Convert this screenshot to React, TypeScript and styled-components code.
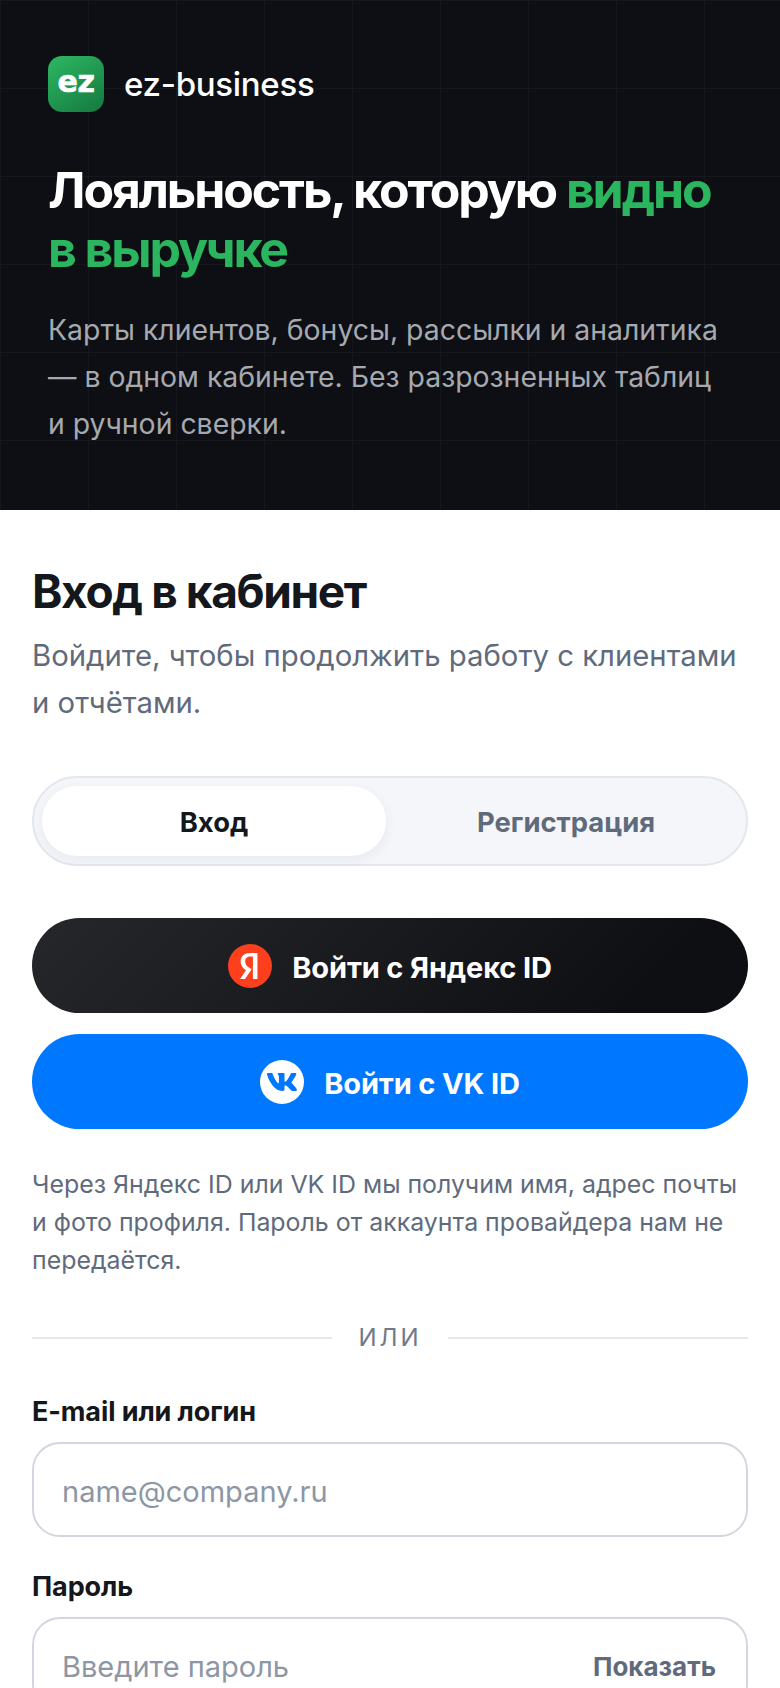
import React from "react";
import styled, { createGlobalStyle } from "styled-components";
import { FaVk } from "react-icons/fa";

const GlobalStyle = createGlobalStyle`
  * {
    box-sizing: border-box;
  }
  html, body {
    margin: 0;
    padding: 0;
    background: #fff;
  }
  body {
    height: 1688px;
    overflow: hidden;
    font-family: Inter, "Noto Sans", sans-serif;
  }
`;

const YandexLogo = () => (
  <svg width="44" height="44" viewBox="2 2 20 20" aria-hidden="true">
    <circle cx="12" cy="12" r="10" fill="#fc3f1d" />
    <path
      fill="#fff"
      d="M13.32 7.666h-.924c-1.694 0-2.585.858-2.585 2.123 0 1.43.616 2.1 1.881 2.959l1.045.704-3.003 4.487H7.49l2.695-4.014c-1.55-1.111-2.42-2.19-2.42-4.015 0-2.288 1.595-3.85 4.62-3.85h3.003v11.868H13.32V7.666z"
    />
  </svg>
);

export default function App() {
  return (
    <>
      <GlobalStyle />
      <Page>
        <Hero>
          <Brand>
            <BrandMark>ez</BrandMark>
            <BrandName>ez-business</BrandName>
          </Brand>
          <HeroTitle>
            Лояльность, которую <Accent>видно в&nbsp;выручке</Accent>
          </HeroTitle>
          <HeroText>
            Карты клиентов, бонусы, рассылки и аналитика — в одном кабинете. Без разрозненных таблиц и ручной сверки.
          </HeroText>
        </Hero>

        <Panel>
          <PanelTitle>Вход в кабинет</PanelTitle>
          <PanelText>Войдите, чтобы продолжить работу с клиентами и отчётами.</PanelText>

          <Tabs>
            <Tab $active>Вход</Tab>
            <Tab>Регистрация</Tab>
          </Tabs>

          <Providers>
            <ProviderButton $variant="yandex">
              <YandexLogo />
              <ProviderLabel>Войти с Яндекс ID</ProviderLabel>
            </ProviderButton>
            <ProviderButton $variant="vk">
              <VkIcon>
                <FaVk size={32} />
              </VkIcon>
              <ProviderLabel>Войти с VK ID</ProviderLabel>
            </ProviderButton>
          </Providers>

          <Hint>
            Через Яндекс ID или VK ID мы получим имя, адрес почты и фото профиля. Пароль от аккаунта провайдера нам не передаётся.
          </Hint>

          <Divider>
            <DividerText>или</DividerText>
          </Divider>

          <Field>
            <FieldLabel>E-mail или логин</FieldLabel>
            <InputBox>
              <Input placeholder="name@company.ru" />
            </InputBox>
          </Field>

          <Field $tight>
            <FieldLabel>Пароль</FieldLabel>
            <InputBox>
              <Input placeholder="Введите пароль" />
              <ShowButton>Показать</ShowButton>
            </InputBox>
          </Field>
        </Panel>
      </Page>
    </>
  );
}

const Page = styled.div`
  width: 780px;
  height: 1688px;
  overflow: hidden;
  background: #fff;
`;

const Hero = styled.section`
  height: 510px;
  padding: 56px 48px 0;
  color: #fff;
  background-color: #0d0f14;
  background-image:
    linear-gradient(rgba(255, 255, 255, 0.03) 1px, transparent 1px),
    linear-gradient(90deg, rgba(255, 255, 255, 0.03) 1px, transparent 1px);
  background-size: 88px 88px;
`;

const Brand = styled.div`
  display: flex;
  align-items: center;
  gap: 20px;
`;

const BrandMark = styled.div`
  width: 56px;
  height: 56px;
  border-radius: 14px;
  display: flex;
  align-items: center;
  justify-content: center;
  padding-bottom: 6px;
  background: linear-gradient(145deg, #2eb862, #14783f);
  color: #fff;
  font-family: "DejaVu Sans", sans-serif;
  font-size: 30px;
  font-weight: 700;
  letter-spacing: -0.5px;
  -webkit-text-stroke: 0.6px #fff;
`;

const BrandName = styled.span`
  font-size: 33px;
  font-weight: 500;
  letter-spacing: -0.3px;
`;

const HeroTitle = styled.h1`
  margin: 49px 0 0;
  font-size: 50px;
  line-height: 59px;
  font-weight: 700;
  letter-spacing: -2.1px;
`;

const Accent = styled.span`
  color: #2bb55f;
`;

const HeroText = styled.p`
  margin: 27px 0 0;
  font-size: 28.4px;
  line-height: 47px;
  color: #a6a9af;
`;

const Panel = styled.section`
  padding: 52px 32px 0;
`;

const PanelTitle = styled.h2`
  margin: 0;
  font-size: 46px;
  line-height: 58px;
  font-weight: 700;
  letter-spacing: -1.38px;
  color: #14171c;
`;

const PanelText = styled.p`
  margin: 12px 0 0;
  font-size: 29.3px;
  line-height: 47px;
  color: #5f6b7d;
`;

const Tabs = styled.div`
  margin-top: 50px;
  height: 90px;
  padding: 8px;
  display: grid;
  grid-template-columns: 1fr 1fr;
  gap: 8px;
  border: 2px solid #e4e8ee;
  border-radius: 45px;
  background: #f4f6fa;
`;

const Tab = styled.div<{ $active?: boolean }>`
  display: flex;
  align-items: center;
  justify-content: center;
  padding-top: 2px;
  border-radius: 35px;
  font-size: 27.4px;
  font-weight: 700;
  color: ${(props) => (props.$active ? "#14171c" : "#5f6b7d")};
  background: ${(props) => (props.$active ? "#fff" : "transparent")};
  box-shadow: ${(props) => (props.$active ? "0 4px 14px rgba(20, 30, 50, 0.06)" : "none")};
`;

const Providers = styled.div`
  margin-top: 52px;
  display: flex;
  flex-direction: column;
  gap: 21px;
`;

const ProviderButton = styled.div<{ $variant: "yandex" | "vk" }>`
  height: 95px;
  border-radius: 48px;
  display: flex;
  align-items: center;
  justify-content: center;
  gap: 20px;
  font-size: 29px;
  font-weight: 700;
  letter-spacing: -0.15px;
  color: #fff;
  background: ${(props) =>
    props.$variant === "yandex" ? "linear-gradient(135deg, #26272b, #0e0f13 85%)" : "#0077ff"};
`;

const ProviderLabel = styled.span`
  padding-top: 3px;
`;

const VkIcon = styled.span`
  width: 44px;
  height: 44px;
  border-radius: 50%;
  display: flex;
  align-items: center;
  justify-content: center;
  background: #fff;
  color: #0077ff;
`;

const Hint = styled.p`
  margin: 36px 0 0;
  font-size: 24.9px;
  line-height: 38px;
  color: #5f6b7d;
`;

const Divider = styled.div`
  margin-top: 40px;
  display: flex;
  align-items: center;
  gap: 26px;

  &::before,
  &::after {
    content: "";
    flex: 1;
    height: 2px;
    background: #e4e8ed;
  }
`;

const DividerText = styled.span`
  font-size: 24px;
  line-height: 38px;
  letter-spacing: 3px;
  text-transform: uppercase;
  color: #6f7a8a;
`;

const Field = styled.div<{ $tight?: boolean }>`
  margin-top: ${(props) => (props.$tight ? "31px" : "36px")};
`;

const FieldLabel = styled.label`
  display: block;
  font-size: 27px;
  line-height: 38px;
  font-weight: 700;
  letter-spacing: -0.1px;
  color: #14171c;
`;

const InputBox = styled.div`
  margin-top: 11px;
  height: 95px;
  padding: 3px 30px 0 28px;
  display: flex;
  align-items: center;
  border: 2px solid #d2d7df;
  border-radius: 28px;
  background: #fff;
`;

const Input = styled.input`
  flex: 1;
  min-width: 0;
  border: none;
  outline: none;
  padding: 0;
  background: transparent;
  font-family: inherit;
  font-size: 29px;

  &::placeholder {
    color: #8c96a5;
    opacity: 1;
  }
`;

const ShowButton = styled.span`
  font-size: 26px;
  font-weight: 700;
  color: #5f6b7d;
`;
